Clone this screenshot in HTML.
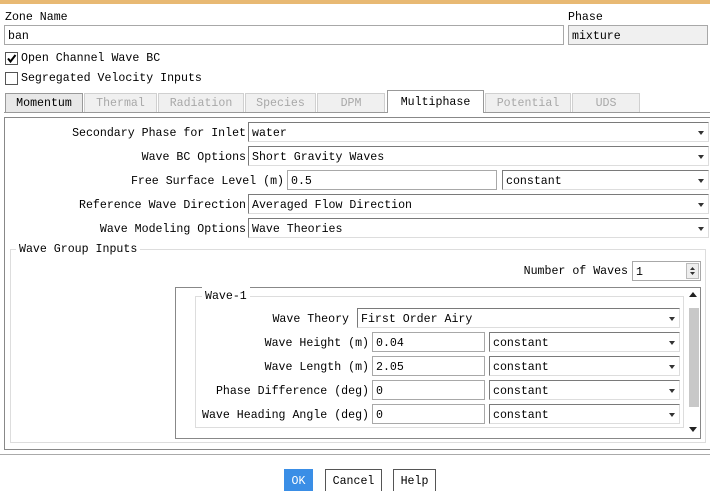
<!DOCTYPE html>
<html><head><style>
*{margin:0;padding:0;box-sizing:border-box}
body{width:710px;height:491px;background:#fff;position:relative;overflow:hidden;font-family:"Liberation Mono",monospace;font-size:11.6px;color:#000}
.a{position:absolute;white-space:nowrap}
.t{position:absolute;line-height:20px;padding-top:2px;white-space:nowrap}
.in{position:absolute;height:20px;border:1px solid #a8a8a8;background:#fff;line-height:21px;padding-left:3px;white-space:nowrap;overflow:hidden}
.dd{position:absolute;height:20px;border:1px solid #7a7a7a;border-right-color:#ddd;border-bottom-color:#ddd;background:#fff;line-height:21px;padding-left:3px;white-space:nowrap}
.dd:after{content:"";position:absolute;right:4px;top:8px;border-left:3.5px solid transparent;border-right:3.5px solid transparent;border-top:4px solid #333}
.tab{position:absolute;top:93px;height:19px;border:1px solid #d0d0d0;border-bottom:none;background:#f0f0f0;color:#a8a8a8;text-align:center;line-height:20px}
.cb{position:absolute;width:13px;height:13px;border:1px solid #555;background:#fff}
.btn{position:absolute;top:469px;height:22px;border:1px solid #555;border-bottom:none;background:#fff;text-align:center;line-height:24px}
</style></head><body>
<div class="a" style="left:0;top:0;width:710px;height:4px;background:#e8b973"></div>
<div class="t" style="left:5px;top:6px">Zone Name</div>
<div class="t" style="left:568px;top:6px">Phase</div>
<div class="in" style="left:4px;top:25px;width:560px">ban</div>
<div class="in" style="left:568px;top:25px;width:140px;background:#f0f0f0">mixture</div>
<div class="cb" style="left:5px;top:52px"><svg width="11" height="11" style="position:absolute;left:0;top:0"><path d="M2 5.5 L4.5 8.5 L9.5 2" stroke="#000" stroke-width="2" fill="none"/></svg></div>
<div class="t" style="left:21px;top:47px">Open Channel Wave BC</div>
<div class="cb" style="left:5px;top:72px"></div>
<div class="t" style="left:21px;top:67px">Segregated Velocity Inputs</div>
<div class="tab" style="left:5px;width:78px;color:#000;background:#e8e8e8;border-color:#999">Momentum</div>
<div class="tab" style="left:84px;width:73px">Thermal</div>
<div class="tab" style="left:158px;width:86px">Radiation</div>
<div class="tab" style="left:245px;width:71px">Species</div>
<div class="tab" style="left:317px;width:68px">DPM</div>
<div class="a" style="left:4px;top:112px;width:706px;height:1px;background:#999"></div>
<div class="tab" style="left:387px;top:90px;height:23px;width:97px;color:#000;background:#fff;border-color:#999;line-height:24px">Multiphase</div>
<div class="tab" style="left:485px;width:86px">Potential</div>
<div class="tab" style="left:572px;width:68px">UDS</div>
<div class="a" style="left:4px;top:117px;width:710px;height:333px;border:1px solid #888;border-right:none"></div>
<div class="t" style="right:464px;top:122px">Secondary Phase for Inlet</div>
<div class="dd" style="left:248px;top:122px;width:461px">water</div>
<div class="t" style="right:464px;top:146px">Wave BC Options</div>
<div class="dd" style="left:248px;top:146px;width:461px">Short Gravity Waves</div>
<div class="t" style="right:426px;top:170px">Free Surface Level (m)</div>
<div class="in" style="left:287px;top:170px;width:210px">0.5</div>
<div class="dd" style="left:502px;top:170px;width:207px">constant</div>
<div class="t" style="right:464px;top:194px">Reference Wave Direction</div>
<div class="dd" style="left:248px;top:194px;width:461px">Averaged Flow Direction</div>
<div class="t" style="right:464px;top:218px">Wave Modeling Options</div>
<div class="dd" style="left:248px;top:218px;width:461px">Wave Theories</div>
<div class="a" style="left:10px;top:249px;width:696px;height:194px;border:1px solid #ddd"></div>
<div class="t" style="left:16px;top:238px;background:#fff;padding:2px 3px 0">Wave Group Inputs</div>
<div class="t" style="right:82px;top:260px">Number of Waves</div>
<div class="in" style="left:632px;top:261px;width:69px">1</div>
<div class="a" style="left:686px;top:263px;width:13px;height:16px;border:1px solid #bbb;background:#eee"><svg width="11" height="14"><path d="M3 6 L5.5 3 L8 6Z M3 8 L5.5 11 L8 8Z" fill="#333"/></svg></div>
<div class="a" style="left:175px;top:287px;width:526px;height:152px;border:1px solid #888"></div>
<div class="a" style="left:688px;top:290px"><svg width="10" height="8"><path d="M1 6 L5 1 L9 6Z" fill="#222"/></svg></div>
<div class="a" style="left:689px;top:308px;width:10px;height:99px;background:#c8c8c8"></div>
<div class="a" style="left:688px;top:424px"><svg width="10" height="8"><path d="M1 2 L5 7 L9 2Z" fill="#222"/></svg></div>
<div class="a" style="left:195px;top:296px;width:489px;height:132px;border:1px solid #ddd"></div>
<div class="t" style="left:202px;top:285px;background:#fff;padding:2px 3px 0">Wave-1</div>
<div class="t" style="right:361px;top:308px">Wave Theory</div>
<div class="dd" style="left:357px;top:308px;width:323px">First Order Airy</div>
<div class="t" style="right:341px;top:332px">Wave Height (m)</div>
<div class="in" style="left:372px;top:332px;width:113px">0.04</div>
<div class="dd" style="left:489px;top:332px;width:191px">constant</div>
<div class="t" style="right:341px;top:356px">Wave Length (m)</div>
<div class="in" style="left:372px;top:356px;width:113px">2.05</div>
<div class="dd" style="left:489px;top:356px;width:191px">constant</div>
<div class="t" style="right:341px;top:380px">Phase Difference (deg)</div>
<div class="in" style="left:372px;top:380px;width:113px">0</div>
<div class="dd" style="left:489px;top:380px;width:191px">constant</div>
<div class="t" style="right:341px;top:404px">Wave Heading Angle (deg)</div>
<div class="in" style="left:372px;top:404px;width:113px">0</div>
<div class="dd" style="left:489px;top:404px;width:191px">constant</div>
<div class="a" style="left:0;top:454px;width:710px;height:1px;background:#aaa"></div>
<div class="btn" style="left:284px;width:29px;background:#3a8ee6;border-color:#3a8ee6;color:#fff">OK</div>
<div class="btn" style="left:325px;width:57px">Cancel</div>
<div class="btn" style="left:393px;width:43px">Help</div>
</body></html>
